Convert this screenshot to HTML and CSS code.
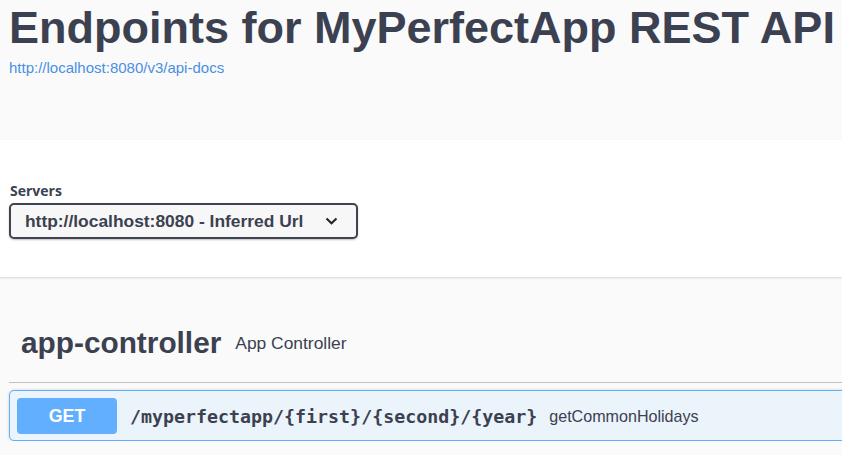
FILE: index.html
```html
<!DOCTYPE html>
<html>
<head>
<meta charset="utf-8">
<link rel="stylesheet" href="styles.css">
</head>
<body>
<div class="info">
  <h1 class="title">Endpoints for MyPerfectApp REST API</h1>
  <a class="doc-link" href="#">http://localhost:8080/v3/api-docs</a>
</div>
<div class="scheme-container">
  <div class="servers-title">Servers</div>
  <div class="server-select">
    <span class="server-value">http://localhost:8080 - Inferred Url</span>
    <svg class="chevron" width="13" height="8" viewBox="0 0 13 8"><path d="M1.5 1.5 L6.5 6.3 L11.5 1.5" fill="none" stroke="#222" stroke-width="2"/></svg>
  </div>
</div>
<div class="tag-section">
  <div class="opblock-tag">
    <h3 class="tag-name">app-controller</h3>
    <span class="tag-desc">App Controller</span>
  </div>
  <div class="opblock">
    <span class="method">GET</span>
    <span class="path">/myperfectapp/{first}/{second}/{year}</span>
    <span class="summary">getCommonHolidays</span>
  </div>
</div>
</body>
</html>
```
FILE: styles.css
```css
html, body {
  margin: 0;
  padding: 0;
  background: #fafafa;
  overflow: hidden;
  font-family: "Liberation Sans", Arial, sans-serif;
  color: #3b4151;
}
.info {
  height: 140px;
  box-sizing: border-box;
  padding: 2px 0 0 9px;
  white-space: nowrap;
}
.title {
  margin: 0;
  font-size: 45px;
  line-height: 52px;
  font-weight: 700;
  color: #3b4151;
}
.doc-link {
  display: block;
  margin-top: 5px;
  font-size: 15px;
  line-height: 18px;
  color: #4990e2;
  text-decoration: none;
}
.scheme-container {
  background: #fff;
  box-shadow: 0 1px 2px 0 rgba(0,0,0,.15);
  padding: 43px 0 38px 9px;
  height: 137px;
  box-sizing: border-box;
}
.servers-title {
  font-family: "Open Sans", "Noto Sans", sans-serif;
  font-weight: 700;
  font-size: 14px;
  line-height: 16px;
  color: #3b4151;
  padding-left: 1px;
}
.server-select {
  margin-top: 4px;
  width: 349px;
  height: 36px;
  box-sizing: border-box;
  border: 2px solid #41444e;
  border-radius: 5px;
  background: #f7f7f7;
  box-shadow: 0 1px 2px 0 rgba(0,0,0,.25);
  display: flex;
  align-items: center;
  justify-content: space-between;
  padding: 0 18px 0 14px;
}
.server-value {
  font-weight: 700;
  font-size: 17.4px;
  color: #3b4151;
  white-space: nowrap;
}
.chevron {
  display: block;
}
.tag-section {
  padding: 50px 0 0 9px;
}
.opblock-tag {
  display: flex;
  align-items: center;
  border-bottom: 1px solid rgba(59,65,81,.3);
  padding: 0 0 23px 12px;
  margin-right: -20px;
}
.tag-name {
  margin: 0;
  font-size: 29.8px;
  line-height: 32px;
  font-weight: 700;
  color: #3b4151;
}
.tag-desc {
  margin-left: 14px;
  font-size: 17.4px;
  color: #3b4151;
}
.opblock {
  margin-top: 7px;
  margin-right: -20px;
  display: flex;
  align-items: center;
  border: 1px solid #61affe;
  border-radius: 5px;
  background: #ebf3fb;
  padding: 7px 7px 6px 7px;
  box-shadow: 0 0 3px rgba(0,0,0,.19);
}
.method {
  width: 100px;
  height: 36px;
  border-radius: 4px;
  background: #61affe;
  color: #fff;
  font-weight: 700;
  font-size: 17.8px;
  display: flex;
  align-items: center;
  justify-content: center;
  flex: none;
}
.path {
  margin-left: 13px;
  font-family: "DejaVu Sans Mono", "Liberation Mono", monospace;
  font-weight: 700;
  font-size: 18.3px;
  color: #3b4151;
  white-space: nowrap;
}
.summary {
  margin-left: 12px;
  font-size: 16.1px;
  color: #3b4151;
  white-space: nowrap;
}
```
